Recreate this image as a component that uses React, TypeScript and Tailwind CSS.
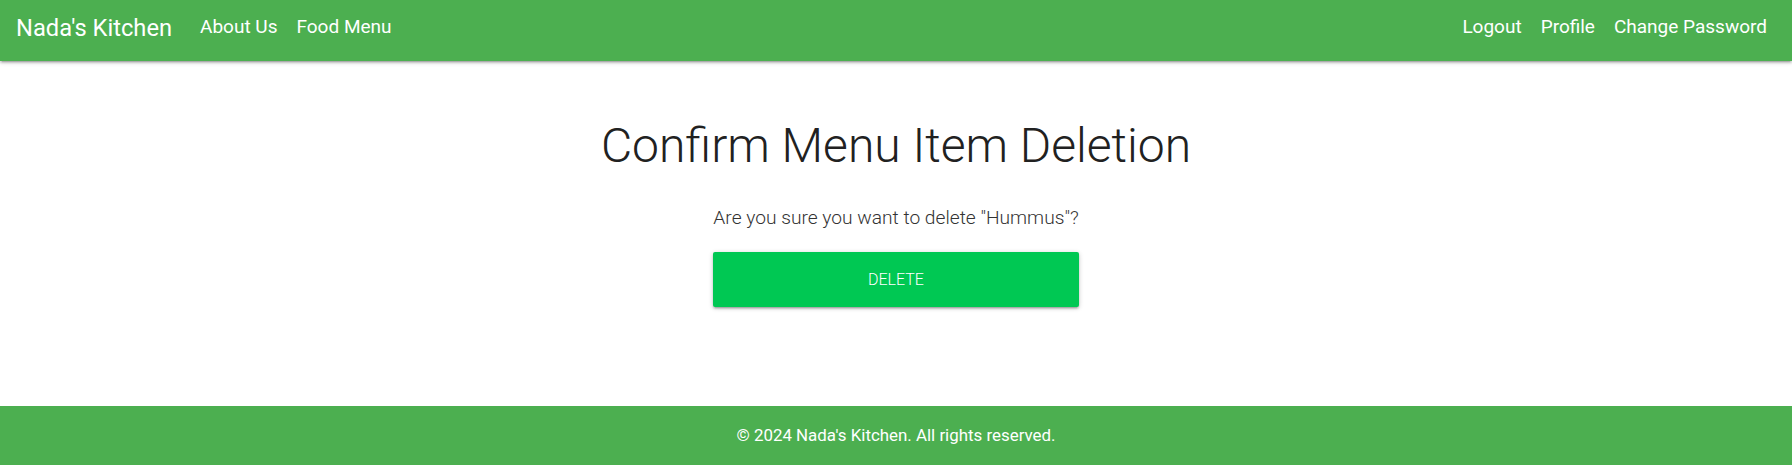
import React from 'react';

const font = { fontFamily: 'Roboto, "Noto Sans", sans-serif' };

export default function App() {
  return (
    <div className="min-h-screen flex flex-col bg-white" style={font}>
      {/* Navbar */}
      <nav className="relative z-10 h-[61px] bg-[#4caf50] text-white flex items-start justify-between shadow-[0_2px_2px_0_rgba(0,0,0,0.14),0_3px_1px_-2px_rgba(0,0,0,0.12),0_1px_5px_0_rgba(0,0,0,0.2)]">
        <div className="flex items-start pl-[16px]">
          <a href="#" className="text-[23.7px] leading-[56px]">Nada's Kitchen</a>
          <div className="flex gap-[19px] ml-[28px]">
            <a href="#" className="text-[19px] leading-[54px]">About Us</a>
            <a href="#" className="text-[19px] leading-[54px]">Food Menu</a>
          </div>
        </div>
        <div className="flex gap-[19px] pr-[25px]">
          <a href="#" className="text-[19px] leading-[54px]">Logout</a>
          <a href="#" className="text-[19px] leading-[54px]">Profile</a>
          <a href="#" className="text-[19px] leading-[54px]">Change Password</a>
        </div>
      </nav>

      {/* Content */}
      <main className="flex-1 flex flex-col items-center">
        <h3 className="mt-[59px] text-[48px] leading-[1.1] font-light text-[#212121]">
          Confirm Menu Item Deletion
        </h3>
        <p className="mt-[31px] text-[19.2px] leading-[28.5px] font-light text-[#333333]">
          Are you sure you want to delete "Hummus"?
        </p>
        <button className="mt-[20px] w-[366px] h-[55px] rounded-[2px] bg-[#00c853] text-white text-[16px] font-light uppercase shadow-[0_2px_2px_0_rgba(0,0,0,0.14),0_3px_1px_-2px_rgba(0,0,0,0.12),0_1px_5px_0_rgba(0,0,0,0.2)]">
          Delete
        </button>
      </main>

      {/* Footer */}
      <footer className="h-[59px] bg-[#4caf50] text-white flex items-center justify-center">
        <span className="text-[16.9px]">© 2024 Nada's Kitchen. All rights reserved.</span>
      </footer>
    </div>
  );
}
